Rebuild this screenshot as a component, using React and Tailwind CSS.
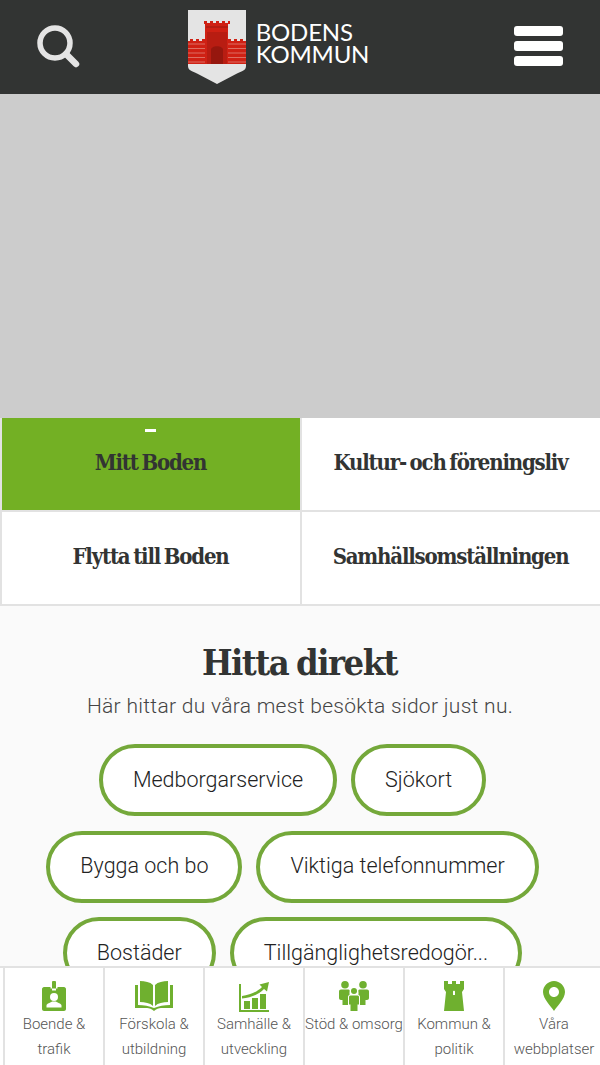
const serif = "font-['DejaVu_Serif_Condensed','DejaVu_Serif',serif]";

function Shield() {
  const bricks = [];
  for (let y = 34; y < 54; y += 4.5) {
    bricks.push(<path key={y} d={`M1 ${y}H18M41 ${y}H59`} stroke="#f0d8d0" strokeWidth="0.7" opacity="0.6" />);
  }
  return (
    <svg width="60" height="74" viewBox="0 0 60 74" className="shrink-0">
      <path d="M1 0H59V56C59 60 56 61 50 63.500L30 74L10 63.500C4 61 1 60 1 56Z" fill="#e4e4e4" />
      <path d="M1 54V31H3V29H6V31H9V29H12V31H15V29H18V14H17V11H20V13H23V11H26V13H29V11H32V13H35V11H38V13H41V11H43V14H41V29H44V31H47V29H50V31H53V29H56V31H59V54Z" fill="#cf2114" />
      {bricks}
      <path d="M19 17H41" stroke="#8e1a10" strokeWidth="0.8" />
      <path d="M20 22H40V54H20Z" fill="#b81d12" />
      <path d="M24 54V40C24 35 36 35 36 40V54Z" fill="#96170e" />
    </svg>
  );
}

function SearchIcon() {
  return (
    <svg width="44" height="44" viewBox="0 0 44 44" fill="none" stroke="#e4e4e4" strokeLinecap="round">
      <circle cx="18" cy="18" r="15" strokeWidth="5.5" />
      <path d="M29 29L39 39" strokeWidth="6.5" />
    </svg>
  );
}

const G = "#6fb02f";
function BadgeIcon() {
  return (
    <svg width="24" height="30" viewBox="0 0 24 30" fill={G}>
      <path d="M2 6H22C23 6 24 7 24 8V28C24 29 23 30 22 30H2C1 30 0 29 0 28V8C0 7 1 6 2 6Z" />
      <rect x="10" y="0" width="4" height="9" rx="1" />
      <path d="M8.500 6H10V9.500H14V6H15.500V7.500H8.500Z" fill="#fff" />
      <circle cx="12" cy="16" r="4" fill="#fff" />
      <path d="M4.5 26.500V24.500C4.5 22.500 9 21.500 10 20.500H14C15 21.500 19.500 22.500 19.500 24.500V26.500Z" fill="#fff" />
    </svg>
  );
}
function BookIcon() {
  return (
    <svg width="38" height="30" viewBox="0 0 38 30" fill={G}>
      <path d="M5 0C10 0 15 1 18 4V25C15 22 10 21 5 21Z" />
      <path d="M33 0C28 0 23 1 20 4V25C23 22 28 21 33 21Z" />
      <path d="M0 4H3V24C9 24 14 25 19 27C24 25 29 24 35 24V4H38V27H26C24 27 21 28 19 30C17 28 14 27 12 27H0Z" />
    </svg>
  );
}
function ChartIcon() {
  return (
    <svg width="30" height="31" viewBox="0 0 30 31" fill={G}>
      <path d="M0 3H2V29H30V31H0Z" />
      <rect x="5" y="20" width="6" height="8" />
      <rect x="13" y="17" width="6" height="11" />
      <rect x="21" y="13" width="6" height="15" />
      <path d="M3 15C11 14 18 11 23 6L20.500 3.500L30 1L28 10.500L25 8C20 13.500 12 16.500 3 17.500Z" />
    </svg>
  );
}
function PeopleIcon() {
  return (
    <svg width="30" height="30" viewBox="0 0 30 30" fill={G}>
      <circle cx="6" cy="3.800" r="3.800" />
      <circle cx="24" cy="3.800" r="3.800" />
      <circle cx="15" cy="10" r="3" />
      <path d="M2 8.500H9.500C10.500 8.500 11 9.500 10.500 11V14C9.500 14 9 15 9 16V24H3.500V19H2C.8 19 0 18.200 0 17V10.500C0 9.300 .8 8.500 2 8.500Z" />
      <path d="M28 8.500H20.500C19.500 8.500 19 9.500 19.500 11V14C20.500 14 21 15 21 16V24H26.500V19H28C29.200 19 30 18.200 30 17V10.500C30 9.300 29.200 8.500 28 8.500Z" />
      <path d="M11.500 14.500H18.500C19.500 14.500 20 15.300 20 16.300V23.500H18.500V30H11.500V23.500H10V16.300C10 15.300 10.500 14.500 11.500 14.500Z" />
    </svg>
  );
}
function TowerIcon() {
  return (
    <svg width="20" height="30" viewBox="0 0 20 30" fill={G}>
      <path fillRule="evenodd" d="M0 0H4V3H8V0H12V3H16V0H20V8L18 11L20 30H0L2 11L0 8ZM9 10.500V14H11V10.500C11 9.500 9 9.500 9 10.500Z" />
    </svg>
  );
}
function PinIcon() {
  return (
    <svg width="22" height="30" viewBox="0 0 22 30" fill={G}>
      <path fillRule="evenodd" d="M11 0C17 0 22 5 22 11C22 18 14 25 11 30C8 25 0 18 0 11C0 5 5 0 11 0ZM11 6C8.200 6 6 8.200 6 11C6 13.800 8.200 16 11 16C13.800 16 16 13.800 16 11C16 8.200 13.800 6 11 6Z" />
    </svg>
  );
}

const pills = ["Medborgarservice", "Sjökort", "Bygga och bo", "Viktiga telefonnummer", "Bostäder", "Tillgänglighetsredogör..."];
const nav = [
  [<BadgeIcon />, "Boende & trafik"],
  [<BookIcon />, "Förskola & utbildning"],
  [<ChartIcon />, "Samhälle & utveckling"],
  [<PeopleIcon />, "Stöd & omsorg"],
  [<TowerIcon />, "Kommun & politik"],
  [<PinIcon />, "Våra webbplatser"],
];

function Tile({ label, active }) {
  return (
    <div className={`relative flex h-[92px] items-center justify-center pb-[4px] ${active ? "bg-[#73b024]" : "bg-white"}`}>
      {active && <span className="absolute left-[143px] top-[11px] h-[3px] w-[11px] bg-white" />}
      <span className={`${serif} pr-[1px] text-[22px] font-bold tracking-[-1.2px] [word-spacing:-2px] text-[#323433]`}>{label}</span>
    </div>
  );
}

export default function App() {
  return (
    <div className="relative h-[1065px] w-full overflow-hidden bg-[#fafafa] font-['Roboto',sans-serif]">
      <header className="flex h-[94px] items-center justify-between bg-[#323433] pl-[37px] pr-[37px]">
        <SearchIcon />
        <div className="mr-[39px] flex items-center gap-[9px]">
          <Shield />
          <div className="pb-[9px] font-['Lato',sans-serif] text-[24px] font-normal leading-[22px] tracking-[-0.2px] text-white">
            <div>BODENS</div>
            <div>KOMMUN</div>
          </div>
        </div>
        <div className="flex w-[49px] flex-col gap-[5px] pb-[2px]">
          <span className="h-[10px] rounded-[3px] bg-white" />
          <span className="h-[10px] rounded-[3px] bg-white" />
          <span className="h-[10px] rounded-[3px] bg-white" />
        </div>
      </header>

      <div className="h-[324px] bg-[#cccccc]" />

      <div className="grid grid-cols-2 gap-[2px] border-b-2 border-[#e2e2e2] bg-[#e2e2e2] pl-[2px]">
        <Tile label="Mitt Boden" active />
        <Tile label="Kultur- och föreningsliv" />
        <Tile label="Flytta till Boden" />
        <Tile label="Samhällsomställningen" />
      </div>

      <section className="flex flex-col items-center px-4 pt-[33px]">
        <h2 className={`${serif} pr-[1px] text-[36px] font-bold leading-[46px] tracking-[-1.5px] [word-spacing:-2px] text-[#323433]`}>Hitta direkt</h2>
        <p className="mt-[6px] text-[21px] font-light leading-[30px] tracking-[0.3px] text-[#444]">Här hittar du våra mest besökta sidor just nu.</p>
        <div className="mt-[23px] mr-[15px] flex flex-wrap justify-center gap-x-[14px] gap-y-[14.500px]">
          {pills.map((p) => (
            <span key={p} className="flex h-[72px] items-center rounded-full border-4 border-[#74a83a] bg-white px-[30px] text-[21.500px] font-light text-[#222]">
              {p}
            </span>
          ))}
        </div>
      </section>

      <nav className="absolute inset-x-0 bottom-0 flex h-[99px] border-t-2 border-[#e2e2e2] bg-white pl-[3px]">
        {nav.map(([icon, label]) => (
          <div key={label} className="flex w-[100px] shrink-0 flex-col items-center border-l-2 border-[#e2e2e2] pt-[12px] text-center">
            <div className="flex h-[32px] items-center justify-center">{icon}</div>
            <div className="text-[15px] font-light leading-[25px] text-[#555]">{label}</div>
          </div>
        ))}
      </nav>
    </div>
  );
}
